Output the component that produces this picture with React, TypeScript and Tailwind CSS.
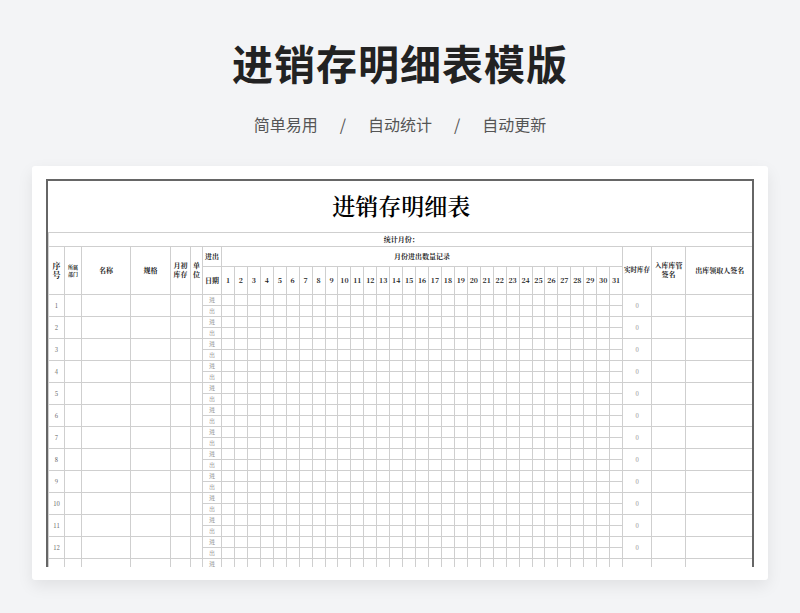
import React from 'react';

const days = Array.from({ length: 31 }, (_, i) => i + 1);
const rows = Array.from({ length: 13 }, (_, i) => i + 1);
const cell = 'border border-[#cfcfcf] p-0 text-center align-middle';

export default function App() {
  return (
    <div className="w-[800px] h-[613px] bg-[#f3f4f6] flex flex-col items-center overflow-hidden" style={{ fontFamily: '"Noto Sans CJK SC", sans-serif' }}>
      <h1 className="mt-[36px] text-[41px] leading-[52px] font-bold text-[#222] tracking-[1px]">进销存明细表模版</h1>
      <div className="mt-[24px] flex items-center gap-[22px] text-[16px] text-[#555]">
        <span>简单易用</span><span>/</span><span>自动统计</span><span>/</span><span>自动更新</span>
      </div>
      <div className="mt-[30px] w-[736px] h-[414px] bg-white rounded-[3px] shadow-[0_6px_16px_rgba(0,0,0,0.08)] px-[14px] pt-[13px]">
        <div className="h-[388px] overflow-hidden border-x-2 border-t-2 border-[#666]" style={{ fontFamily: '"Noto Serif CJK SC", "Noto Sans CJK SC", serif' }}>
          <table className="table-fixed border-collapse w-[705px] text-[7px] text-[#222]">
            <colgroup>
              <col className="w-[16px]" /><col className="w-[17px]" /><col className="w-[49px]" /><col className="w-[40px]" />
              <col className="w-[20px]" /><col className="w-[12px]" /><col className="w-[19px]" />
              {days.map(d => <col key={d} className="w-[12.94px]" />)}
              <col className="w-[29px]" /><col className="w-[34px]" /><col className="w-[68px]" />
            </colgroup>
            <tbody>
              <tr className="h-[51px]">
                <td colSpan={41} className="border-b border-[#cfcfcf] text-center text-[23px] font-semibold text-black">进销存明细表</td>
              </tr>
              <tr className="h-[14px]">
                <td colSpan={41} className={cell + ' font-bold'}>统计月份：</td>
              </tr>
              <tr className="h-[20px]">
                <td rowSpan={2} className={cell + ' font-bold text-[8px] leading-[9px]'}>序<br />号</td>
                <td rowSpan={2} className={cell + ' font-bold text-[5px] leading-[7px]'}>所属<br />部门</td>
                <td rowSpan={2} className={cell + ' font-bold'}>名称</td>
                <td rowSpan={2} className={cell + ' font-bold'}>规格</td>
                <td rowSpan={2} className={cell + ' font-bold leading-[9px]'}>月初<br />库存</td>
                <td rowSpan={2} className={cell + ' font-bold leading-[9px]'}>单<br />位</td>
                <td className={cell + ' font-bold'}>进出</td>
                <td colSpan={31} className={cell + ' font-bold'}>月份进出数量记录</td>
                <td rowSpan={2} className={cell + ' font-bold text-[6.5px]'}>实时库存</td>
                <td rowSpan={2} className={cell + ' font-bold leading-[9px]'}>入库库管<br />签名</td>
                <td rowSpan={2} className={cell + ' font-bold'}>出库领取人签名</td>
              </tr>
              <tr className="h-[28px]">
                <td className={cell + ' font-bold'}>日期</td>
                {days.map(d => <td key={d} className={cell + ' font-bold'}>{d}</td>)}
              </tr>
              {rows.map(r => (
                <React.Fragment key={r}>
                  <tr className="h-[11px]">
                    <td rowSpan={2} className={cell + ' text-[6px] text-[#555]'}>{r}</td>
                    <td rowSpan={2} className={cell}></td>
                    <td rowSpan={2} className={cell}></td>
                    <td rowSpan={2} className={cell}></td>
                    <td rowSpan={2} className={cell}></td>
                    <td rowSpan={2} className={cell}></td>
                    <td className={cell + ' text-[6px] text-[#777] leading-[10px]'}>进</td>
                    {days.map(d => <td key={d} className={cell}></td>)}
                    <td rowSpan={2} className={cell + ' text-[6px] text-[#888]'}>0</td>
                    <td rowSpan={2} className={cell}></td>
                    <td rowSpan={2} className={cell}></td>
                  </tr>
                  <tr className="h-[11px]">
                    <td className={cell + ' text-[6px] text-[#777] leading-[10px]'}>出</td>
                    {days.map(d => <td key={d} className={cell}></td>)}
                  </tr>
                </React.Fragment>
              ))}
            </tbody>
          </table>
        </div>
      </div>
    </div>
  );
}
